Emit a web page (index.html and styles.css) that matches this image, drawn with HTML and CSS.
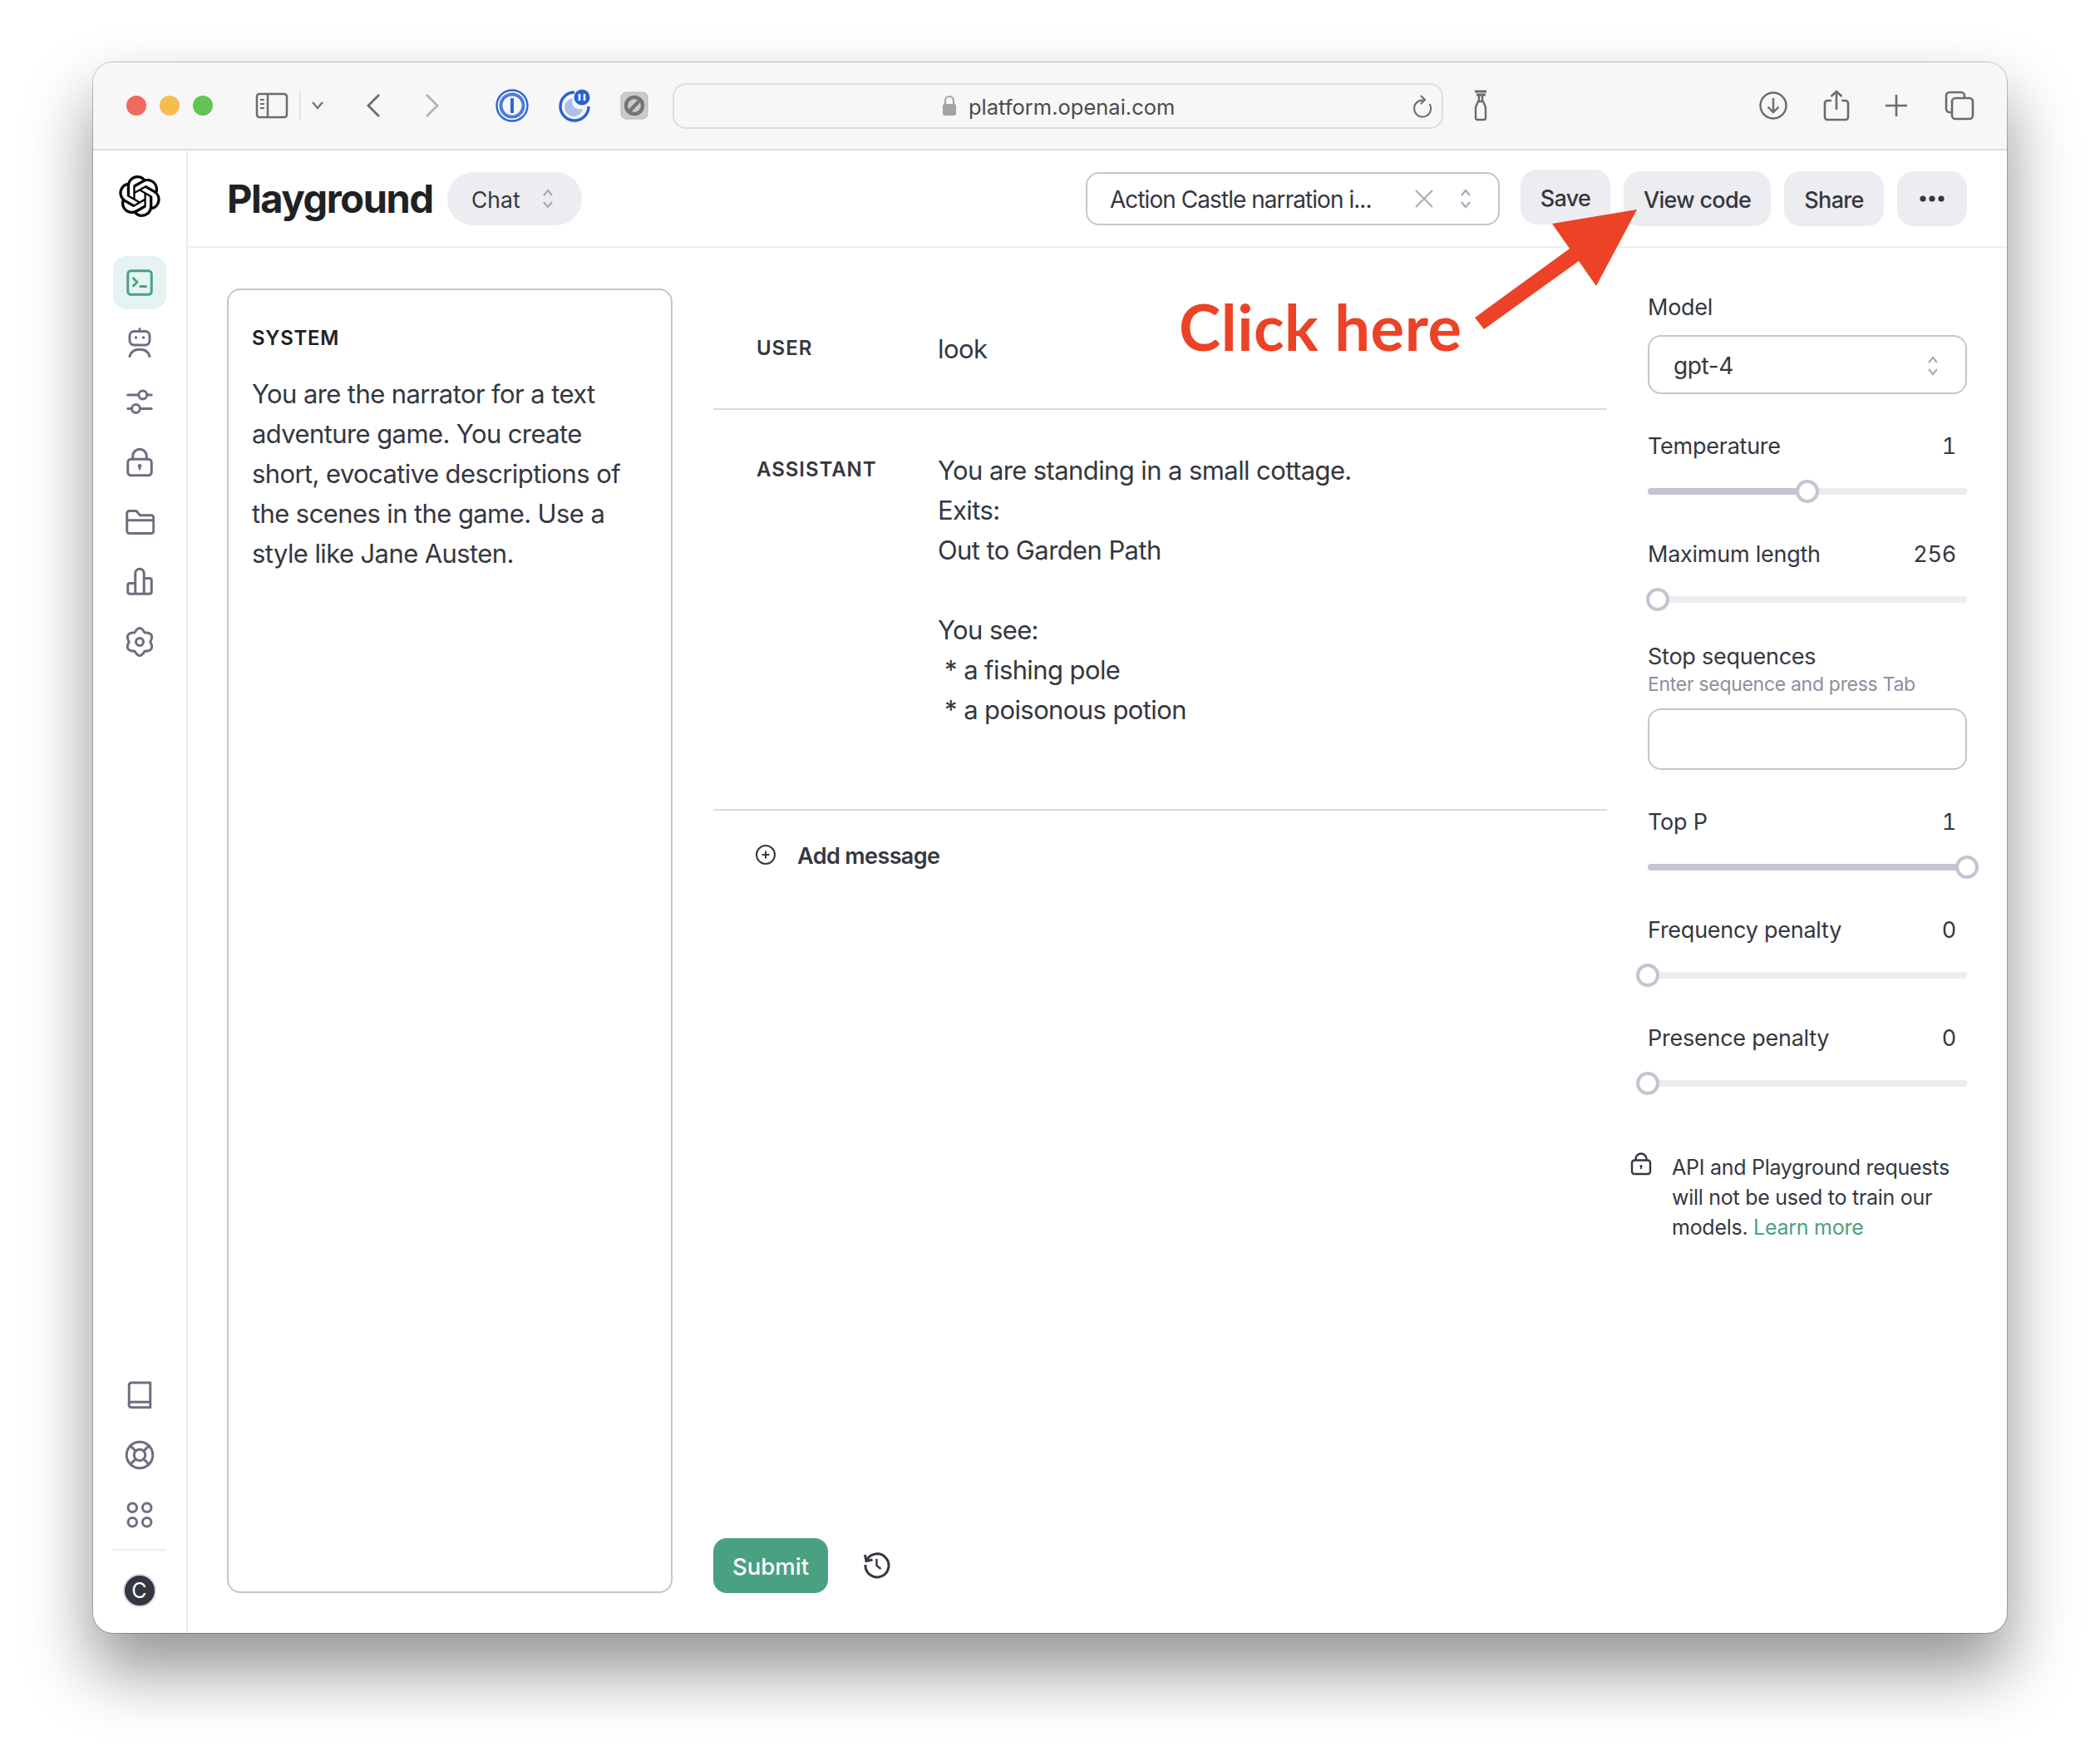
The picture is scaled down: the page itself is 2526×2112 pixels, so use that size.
FILE: index.html
```html
<!DOCTYPE html>
<html lang="en">
<head>
    <meta charset="UTF-8">
    <title>Playground - OpenAI</title>
    <link rel="stylesheet" href="styles.css">
</head>
<body>
<div class="window">
    <div class="toolbar">
        <div class="lights">
            <span class="light red"></span>
            <span class="light yellow"></span>
            <span class="light green"></span>
        </div>
        <svg class="tb-sidebar" width="40" height="32" viewBox="0 0 40 32" fill="none" stroke="#6b6b6b" stroke-width="2.5">
            <rect x="2" y="2" width="36" height="28" rx="3"/>
            <path d="M15 2v28"/>
            <path d="M6 9h5M6 14h5M6 19h5" stroke-width="2"/>
        </svg>
        <span class="tb-sep"></span>
        <svg class="tb-caret" width="16" height="12" viewBox="0 0 16 12" fill="none" stroke="#777" stroke-width="2.4"><path d="M2 2l6 7 6-7"/></svg>
        <svg class="tb-back" width="20" height="30" viewBox="0 0 20 30" fill="none" stroke="#6b6b6b" stroke-width="2.8"><path d="M17 2L4 15l13 13"/></svg>
        <svg class="tb-forward" width="20" height="30" viewBox="0 0 20 30" fill="none" stroke="#b3b3b3" stroke-width="2.8"><path d="M3 2l13 13L3 28"/></svg>
        <svg class="tb-onepass" width="40" height="40" viewBox="0 0 40 40" fill="none">
            <circle cx="20" cy="20" r="18.5" stroke="#2f66d8" stroke-width="2.4"/>
            <circle cx="20" cy="20" r="13.5" stroke="#4b7ddc" stroke-width="4"/>
            <rect x="18" y="11" width="4" height="18" rx="1" fill="#2f66d8"/>
        </svg>
        <svg class="tb-moon" width="42" height="42" viewBox="0 0 42 42" fill="none">
            <path d="M22 5a17 17 0 1 0 17 17" stroke="#2b60d6" stroke-width="3.4"/>
            <path d="M20 12a11 11 0 1 0 12 13c-8 2-15-4-12-13z" fill="#a9bfec"/>
            <circle cx="31" cy="11" r="9.5" fill="#2b60d6"/>
            <path d="M28 7v8M34 7v8" stroke="#fff" stroke-width="2.6"/>
        </svg>
        <svg class="tb-block" width="34" height="34" viewBox="0 0 34 34" fill="none">
            <rect x="1" y="1" width="32" height="32" rx="6" fill="#cbcbcb" stroke="#b5b5b5"/>
            <circle cx="17" cy="17" r="10" stroke="#757575" stroke-width="4.4"/>
            <path d="M11 24L24 10" stroke="#757575" stroke-width="4.4"/>
        </svg>
        <div class="urlbar">
            <svg class="url-lock" width="18" height="26" viewBox="0 0 18 26" fill="none">
                <path d="M4 12V7a5 5 0 0 1 10 0v5" stroke="#a3a3a3" stroke-width="2.2"/>
                <rect x="1" y="11" width="16" height="14" rx="2.5" fill="#a3a3a3"/>
            </svg>
            <span class="url-text">platform.openai.com</span>
            <svg class="url-reload" width="26" height="30" viewBox="0 0 26 30" fill="none" stroke="#6b6b6b" stroke-width="2">
                <path d="M20.5 12a10 10 0 1 1-7.5-4.500"/>
                <path d="M10 2l5 5-5 5"/>
            </svg>
        </div>
        <svg class="tb-spray" width="20" height="38" viewBox="0 0 20 38" fill="none" stroke="#6b6b6b" stroke-width="2.4">
            <path d="M3 2h14M5 6h11" stroke-width="3"/>
            <path d="M8 7v7M12 7v7"/>
            <path d="M7 14h6l3 7v13a2 2 0 0 1-2 2H6a2 2 0 0 1-2-2V21z"/>
        </svg>
        <svg class="tb-download" width="36" height="36" viewBox="0 0 36 36" fill="none" stroke="#6b6b6b" stroke-width="2.4">
            <circle cx="18" cy="18" r="15.500"/>
            <path d="M18 9v17M11.500 19.500L18 26l6.500-6.500"/>
        </svg>
        <svg class="tb-share" width="32" height="38" viewBox="0 0 32 38" fill="none" stroke="#6b6b6b" stroke-width="2.6">
            <path d="M10 13H5a3 3 0 0 0-3 3v17a3 3 0 0 0 3 3h22a3 3 0 0 0 3-3V16a3 3 0 0 0-3-3h-5"/>
            <path d="M16 24V2M9.500 8L16 2l6.500 6"/>
        </svg>
        <svg class="tb-plus" width="28" height="28" viewBox="0 0 28 28" fill="none" stroke="#6b6b6b" stroke-width="2.6"><path d="M14 1v26M1 14h26"/></svg>
        <svg class="tb-tabs" width="36" height="36" viewBox="0 0 36 36" fill="none" stroke="#6b6b6b" stroke-width="2.6">
            <path d="M8 26H6a4 4 0 0 1-4-4V6a4 4 0 0 1 4-4h14a4 4 0 0 1 4 4v2"/>
            <rect x="9" y="9" width="25" height="25" rx="4"/>
        </svg>
    </div>

    <div class="app">
        <aside class="sidebar">
            <svg class="logo" width="50" height="50" viewBox="0 0 24 24" fill="#000"><path d="M22.2819 9.8211a5.9847 5.9847 0 0 0-.5157-4.9108 6.0462 6.0462 0 0 0-6.5098-2.9A6.0651 6.0651 0 0 0 4.9807 4.1818a5.9847 5.9847 0 0 0-3.9977 2.9 6.0462 6.0462 0 0 0 .7427 7.0966 5.98 5.98 0 0 0 .511 4.9107 6.051 6.051 0 0 0 6.5146 2.9001A5.9847 5.9847 0 0 0 13.2599 24a6.0557 6.0557 0 0 0 5.7718-4.2058 5.9894 5.9894 0 0 0 3.9977-2.9001 6.0557 6.0557 0 0 0-.7475-7.0729zm-9.022 12.6081a4.4755 4.4755 0 0 1-2.8764-1.0408l.1419-.0804 4.7783-2.7582a.7948.7948 0 0 0 .3927-.6813v-6.7369l2.02 1.1686a.071.071 0 0 1 .038.052v5.5826a4.504 4.504 0 0 1-4.4945 4.4944zm-9.6607-4.1254a4.4708 4.4708 0 0 1-.5346-3.0137l.142.0852 4.783 2.7582a.7712.7712 0 0 0 .7806 0l5.8428-3.3685v2.3324a.0804.0804 0 0 1-.0332.0615L9.74 19.9502a4.4992 4.4992 0 0 1-6.1408-1.6464zM2.3408 7.8956a4.485 4.485 0 0 1 2.3655-1.9728V11.6a.7664.7664 0 0 0 .3879.6765l5.8144 3.3543-2.0201 1.1685a.0757.0757 0 0 1-.071 0l-4.8303-2.7865A4.504 4.504 0 0 1 2.3408 7.872zm16.5963 3.8558L13.1038 8.364 15.1192 7.2a.0757.0757 0 0 1 .071 0l4.8303 2.7913a4.4944 4.4944 0 0 1-.6765 8.1042v-5.6772a.79.79 0 0 0-.407-.667zm2.0107-3.0231l-.142-.0852-4.7735-2.7818a.7759.7759 0 0 0-.7854 0L9.409 9.2297V6.8974a.0662.0662 0 0 1 .0284-.0615l4.8303-2.7866a4.4992 4.4992 0 0 1 6.6802 4.66zM8.3065 12.863l-2.02-1.1638a.0804.0804 0 0 1-.038-.0567V6.0742a4.4992 4.4992 0 0 1 7.3757-3.4537l-.142.0805L8.704 5.459a.7948.7948 0 0 0-.3927.6813zm1.0976-2.3654l2.602-1.4998 2.6069 1.4998v2.9994l-2.5974 1.4997-2.6067-1.4997Z"/></svg>
            <nav class="side-nav">
                <a class="side-item active">
                    <svg class="side-icon" viewBox="0 0 24 24"><rect x="2.500" y="2.500" width="19" height="19" rx="2.500"/><path d="M7 8.500l3 3-3 3M12.500 15h4.500"/></svg>
                </a>
                <a class="side-item">
                    <svg class="side-icon" viewBox="0 0 24 24"><rect x="4" y="3" width="16" height="11" rx="3.500"/><path d="M12 1v2M4 23c1-3.500 4-5.500 8-5.500s7 2 8 5.500"/><circle class="dot" cx="9" cy="8" r="1.200"/><circle class="dot" cx="15" cy="8" r="1.200"/></svg>
                </a>
                <a class="side-item">
                    <svg class="side-icon" viewBox="0 0 24 24"><path d="M2.500 6H11M18 6h3.500M2.500 17H5.500M12.500 17h9"/><circle cx="14.500" cy="6" r="3.300"/><circle cx="9" cy="17" r="3.300"/></svg>
                </a>
                <a class="side-item">
                    <svg class="side-icon" viewBox="0 0 24 24"><rect x="2.500" y="9.500" width="19" height="13" rx="2.500"/><path d="M6.500 9.500V7a5.500 5.500 0 0 1 11 0v2.500"/><circle class="dot" cx="12" cy="15" r="1.600"/><path d="M12 15v2.500" stroke-width="1.600"/></svg>
                </a>
                <a class="side-item">
                    <svg class="side-icon" viewBox="0 0 24 24"><path d="M1.800 19V5a2 2 0 0 1 2-2h5.500l3 3.500h8.900a2 2 0 0 1 2 2V19a2 2 0 0 1-2 2H3.800a2 2 0 0 1-2-2z"/><path d="M1.800 10.500h20.400"/></svg>
                </a>
                <a class="side-item">
                    <svg class="side-icon" viewBox="0 0 24 24"><path d="M8.500 21.500H4A1.500 1.500 0 0 1 2.500 20v-5.500A1.500 1.500 0 0 1 4 13h4.500M8.500 21.500V5a3.500 3.500 0 0 1 7 0v16.500M15.500 9H20a1.500 1.500 0 0 1 1.500 1.500V20a1.500 1.500 0 0 1-1.500 1.500H8.500"/></svg>
                </a>
                <a class="side-item">
                    <svg class="side-icon" viewBox="0 0 24 24"><path d="M8 4.500Q12-2.500 16 4.500Q24.500 4.800 20.500 12Q24.500 19.200 16 19.500Q12 26.500 8 19.500Q-.5 19.200 3.500 12Q-.5 4.800 8 4.500Z"/><circle cx="12" cy="12" r="3"/></svg>
                </a>
            </nav>
            <nav class="side-nav bottom">
                <a class="side-item">
                    <svg class="side-icon" viewBox="0 0 24 24"><path d="M20.500 17.500H5.500a2.200 2.200 0 0 0 0 4.400h15V2H5.500a2 2 0 0 0-2 2v15.500"/></svg>
                </a>
                <a class="side-item">
                    <svg class="side-icon" viewBox="0 0 24 24"><circle cx="12" cy="12" r="10.500"/><circle cx="12" cy="12" r="4.500"/><path d="M4.600 4.600l4.200 4.200M19.400 4.600l-4.200 4.200M4.600 19.400l4.200-4.200M19.400 19.400l-4.200-4.200"/></svg>
                </a>
                <a class="side-item">
                    <svg class="side-icon" viewBox="0 0 24 24"><circle cx="6.200" cy="6.200" r="3.500"/><circle cx="17.800" cy="6.200" r="3.500"/><circle cx="6.200" cy="17.800" r="3.500"/><circle cx="17.800" cy="17.800" r="3.500"/></svg>
                </a>
            </nav>
            <div class="side-divider"></div>
            <div class="avatar">C</div>
        </aside>

        <div class="main">
            <header class="topbar">
                <h1 class="title">Playground</h1>
                <div class="mode-pill">
                    <span>Chat</span>
                    <svg class="updown" viewBox="0 0 16 26"><path d="M3 9l5-6 5 6M3 17l5 6 5-6"/></svg>
                </div>
                <div class="preset">
                    <span class="preset-name">Action Castle narration i...</span>
                    <svg class="preset-x" width="26" height="26" viewBox="0 0 26 26" fill="none" stroke="#a9a9b8" stroke-width="2"><path d="M3 3l20 20M23 3L3 23"/></svg>
                    <svg class="updown" viewBox="0 0 16 26"><path d="M3 9l5-6 5 6M3 17l5 6 5-6"/></svg>
                </div>
                <button class="btn btn-save">Save</button>
                <button class="btn btn-code">View code</button>
                <button class="btn btn-share">Share</button>
                <button class="btn btn-more">
                    <svg width="30" height="10" viewBox="0 0 30 10" fill="#353740"><circle cx="4" cy="5" r="3.600"/><circle cx="15" cy="5" r="3.600"/><circle cx="26" cy="5" r="3.600"/></svg>
                </button>
            </header>

            <div class="content">
                <section class="system">
                    <div class="system-label">SYSTEM</div>
                    <p class="system-text">You are the narrator for a text adventure game. You create short, evocative descriptions of the scenes in the game. Use a style like Jane Austen.</p>
                </section>

                <section class="messages">
                    <div class="message msg-user">
                        <div class="role">USER</div>
                        <div class="msg-text">look</div>
                    </div>
                    <div class="message msg-assistant">
                        <div class="role">ASSISTANT</div>
                        <div class="msg-text">You are standing in a small cottage.<br>Exits:<br>Out to Garden Path<br><br>You see:<br>&nbsp;* a fishing pole<br>&nbsp;* a poisonous potion</div>
                    </div>
                    <div class="add-message">
                        <svg width="26" height="26" viewBox="0 0 26 26" fill="none" stroke="#353740" stroke-width="2"><circle cx="13" cy="13" r="11"/><path d="M13 8.500v9M8.500 13h9"/></svg>
                        <span>Add message</span>
                    </div>
                    <div class="submit-row">
                        <button class="submit">Submit</button>
                        <svg class="history" width="34" height="34" viewBox="0 0 34 34" fill="none" stroke="#353740" stroke-width="3">
                            <path d="M4.500 11.500A14 14 0 1 1 3 17"/>
                            <path d="M2.500 5l1.500 7.500 7.500-1.500"/>
                            <path d="M16.500 10v8l5 4" stroke-width="2.400"/>
                        </svg>
                    </div>
                </section>

                <aside class="params">
                    <div class="label">Model</div>
                    <div class="model-select">
                        <span>gpt-4</span>
                        <svg class="updown" viewBox="0 0 16 26"><path d="M3 9l5-6 5 6M3 17l5 6 5-6"/></svg>
                    </div>

                    <div class="param first">
                        <div class="param-row"><span>Temperature</span><span class="param-value">1</span></div>
                        <div class="slider"><div class="track"></div><div class="fill" style="width: 50%"></div><div class="thumb" style="left: 50%"></div></div>
                    </div>
                    <div class="param">
                        <div class="param-row"><span>Maximum length</span><span class="param-value">256</span></div>
                        <div class="slider"><div class="track"></div><div class="thumb" style="left: 3.1%"></div></div>
                    </div>

                    <div class="stop">
                        <div class="label">Stop sequences</div>
                        <div class="hint">Enter sequence and press Tab</div>
                        <div class="stop-input"></div>
                    </div>

                    <div class="param first">
                        <div class="param-row"><span>Top P</span><span class="param-value">1</span></div>
                        <div class="slider"><div class="track"></div><div class="fill" style="width: 100%"></div><div class="thumb" style="left: 100%"></div></div>
                    </div>
                    <div class="param">
                        <div class="param-row"><span>Frequency penalty</span><span class="param-value">0</span></div>
                        <div class="slider"><div class="track"></div><div class="thumb" style="left: 0%"></div></div>
                    </div>
                    <div class="param">
                        <div class="param-row"><span>Presence penalty</span><span class="param-value">0</span></div>
                        <div class="slider"><div class="track"></div><div class="thumb" style="left: 0%"></div></div>
                    </div>

                    <div class="note">
                        <svg class="note-lock" width="26" height="28" viewBox="0 0 26 28" fill="none" stroke="#353740" stroke-width="2.400">
                            <rect x="2" y="9.500" width="22" height="16.500" rx="3"/>
                            <path d="M6.500 9.500V8a6.500 6.500 0 0 1 13 0v1.500"/>
                            <circle cx="13" cy="16.500" r="1.600" fill="#353740" stroke="none"/>
                            <path d="M13 17v3" stroke-width="1.800"/>
                        </svg>
                        <p>API and Playground requests will not be used to train our models. <a class="learn">Learn more</a></p>
                    </div>
                </aside>
            </div>
        </div>
    </div>

    <!-- annotation drawn over the screenshot -->
    <div class="click-here">Click here</div>
    <svg class="click-arrow" width="200" height="150" viewBox="0 0 200 150"><polygon fill="#ec4225" points="195,2 93,19 114,49 0,132 11,146 125,64 146,94"/></svg>
</div>
</body>
</html>
```

FILE: styles.css
```css
* {
    box-sizing: border-box;
}

html, body {
    margin: 0;
    height: 100%;
}

body {
    background: #fff;
    padding: 75px 112px 0;
    font-family: Inter, "Liberation Sans", sans-serif;
    color: #353740;
    overflow: hidden;
}

svg {
    display: block;
    flex: none;
}

.window {
    position: relative;
    width: 2302px;
    height: 1889px;
    border-radius: 24px;
    background: #fff;
    box-shadow: 0 0 0 1px rgba(0, 0, 0, 0.22), 0 44px 80px 2px rgba(0, 0, 0, 0.42);
    display: flex;
    flex-direction: column;
    overflow: visible;
}

/* safari toolbar */
.toolbar {
    height: 106px;
    flex: none;
    background: #f7f7f7;
    border-bottom: 2px solid #dedede;
    border-radius: 24px 24px 0 0;
    display: flex;
    align-items: center;
    padding-left: 40px;
}

.lights {
    display: flex;
    gap: 16px;
}

.light {
    width: 24px;
    height: 24px;
    border-radius: 50%;
}

.red { background: #ee6a5f; }
.yellow { background: #f5bd4f; }
.green { background: #61c454; }

.tb-sidebar { margin-left: 51px; }
.tb-sep {
    width: 2px;
    height: 36px;
    background: #e4e4e4;
    margin-left: 13px;
}
.tb-caret { margin-left: 12px; }
.tb-back { margin-left: 49px; }
.tb-forward { margin-left: 51px; }
.tb-onepass { margin-left: 66px; }
.tb-moon { margin-left: 33px; }
.tb-block { margin-left: 35px; }

.urlbar {
    width: 927px;
    height: 55px;
    margin-left: 29px;
    border: 2px solid #dedede;
    border-radius: 16px;
    display: flex;
    align-items: center;
    padding-left: 322px;
    position: relative;
}

.url-text {
    margin-left: 14px;
    padding-top: 3px;
    font-size: 25.500px;
    color: #4a4a4a;
}

.url-reload {
    position: absolute;
    right: 9px;
    top: 11px;
}

.tb-spray { margin-left: 35px; }
.tb-download { margin-left: 324px; }
.tb-share { margin-left: 42px; }
.tb-plus { margin-left: 42px; }
.tb-tabs { margin-left: 44px; }

/* app below the toolbar */
.app {
    flex: 1;
    display: flex;
    min-height: 0;
}

.sidebar {
    width: 114px;
    flex: none;
    border-right: 2px solid #ececf1;
    border-radius: 0 0 0 24px;
    padding: 30px 1px 31px 0;
    display: flex;
    flex-direction: column;
    align-items: center;
}

.side-nav {
    display: flex;
    flex-direction: column;
    align-items: center;
    gap: 8px;
    margin-top: 47px;
}

.side-nav.bottom {
    margin-top: auto;
    gap: 36px;
}

.side-item {
    width: 64px;
    height: 64px;
    border-radius: 16px;
    display: flex;
    align-items: center;
    justify-content: center;
}

.side-nav.bottom .side-item {
    height: 36px;
}

.side-item.active {
    background: #e6f3f3;
}

.side-icon {
    width: 36px;
    height: 36px;
    fill: none;
    stroke: #6e6e80;
    stroke-width: 2;
    stroke-linecap: round;
    stroke-linejoin: round;
}

.side-icon .dot {
    fill: #6e6e80;
    stroke: none;
}

.active .side-icon {
    stroke: #4aa181;
}

.side-divider {
    width: 64px;
    height: 2px;
    background: #ececf1;
    margin-top: 23px;
}

.avatar {
    width: 40px;
    height: 40px;
    margin-top: 28px;
    border-radius: 50%;
    background: #353740;
    border: 2px solid #d9d9e3;
    color: #fff;
    font-size: 25px;
    display: flex;
    align-items: center;
    justify-content: center;
}

.main {
    flex: 1;
    min-width: 0;
    display: flex;
    flex-direction: column;
}

.topbar {
    height: 117px;
    flex: none;
    border-bottom: 2px solid #ececf1;
    display: flex;
    align-items: center;
    padding: 0 48px 0 47px;
}

.title {
    margin: 0;
    font-size: 47px;
    font-weight: 700;
    letter-spacing: -0.03em;
    color: #202123;
    width: 265px;
}

.mode-pill {
    width: 162px;
    height: 64px;
    border-radius: 32px;
    background: #ececf1;
    display: flex;
    align-items: center;
    justify-content: space-between;
    padding: 0 33px 0 29px;
    font-size: 26.500px;
}

.mode-pill span {
    padding-top: 3px;
}

.updown {
    width: 16px;
    height: 26px;
    fill: none;
    stroke: #a9a9b8;
    stroke-width: 2.200;
}

.preset {
    width: 498px;
    height: 64px;
    margin-left: auto;
    border: 2px solid #c5c5d2;
    border-radius: 16px;
    display: flex;
    align-items: center;
    padding: 0 31px 0 27px;
    font-size: 28px;
    letter-spacing: -0.95px;
}

.preset-name {
    flex: 1;
    white-space: nowrap;
    padding-top: 3px;
}

.preset-x {
    margin-right: 29px;
}

.btn {
    height: 66px;
    border: none;
    border-radius: 20px;
    background: #ececf1;
    color: #353740;
    font-family: inherit;
    font-size: 27px;
    font-weight: 500;
    letter-spacing: -0.7px;
    padding: 3px 0 0;
    margin-left: 16px;
    display: flex;
    align-items: center;
    justify-content: center;
}

.btn-save { width: 108px; margin-left: 25px; margin-top: -4px; }
.btn-code { width: 177px; }
.btn-share { width: 120px; }
.btn-more { width: 84px; padding: 0; }

.content {
    flex: 1;
    min-height: 0;
    display: flex;
    gap: 49px;
    padding: 49px 48px 48px 47px;
}

.system {
    width: 536px;
    flex: none;
    border: 2px solid #c5c5d2;
    border-radius: 16px;
    padding: 42px 28px;
}

.system-label {
    font-size: 24px;
    font-weight: 600;
    letter-spacing: 0.03em;
    line-height: 32px;
    color: #202123;
}

.system-text {
    margin: 27px 0 0;
    font-size: 31px;
    letter-spacing: -0.6px;
    line-height: 48px;
}

.messages {
    flex: 1;
    min-width: 0;
    display: flex;
    flex-direction: column;
}

.message {
    display: flex;
    padding-left: 52px;
    border-bottom: 2px solid #d9d9e3;
}

.msg-user {
    padding-top: 49px;
    padding-bottom: 47px;
}

.msg-assistant {
    padding-top: 49px;
    padding-bottom: 95px;
}

.role {
    width: 218px;
    flex: none;
    font-size: 24px;
    font-weight: 600;
    letter-spacing: 0.04em;
    line-height: 46px;
}

.msg-text {
    font-size: 31px;
    letter-spacing: -0.6px;
    line-height: 48px;
}

.add-message {
    display: flex;
    align-items: center;
    padding: 35px 0 0 50px;
    font-size: 27px;
    font-weight: 600;
    letter-spacing: -0.6px;
    line-height: 40px;
}

.add-message svg {
    margin-right: 25px;
    margin-top: -5px;
}

.submit-row {
    margin-top: auto;
    display: flex;
    align-items: center;
}

.submit {
    width: 138px;
    height: 66px;
    border: none;
    border-radius: 16px;
    background: #4aa181;
    color: #fff;
    font-family: inherit;
    font-size: 27.500px;
    font-weight: 500;
    padding: 2px 0 0;
}

.history {
    margin-left: 42px;
    margin-top: -3px;
}

/* settings column */
.params {
    width: 384px;
    flex: none;
    padding-top: 4px;
    font-size: 27px;
    letter-spacing: -0.25px;
    line-height: 36px;
}

.label {
    padding-top: 1px;
    margin-bottom: -1px;
}

.model-select {
    height: 71px;
    margin-top: 16px;
    border: 2px solid #c5c5d2;
    border-radius: 16px;
    display: flex;
    align-items: center;
    justify-content: space-between;
    padding: 2px 31px 0 29px;
    font-size: 28px;
    letter-spacing: -0.4px;
}

.param {
    margin-top: 44px;
}

.param.first {
    margin-top: 45px;
}

.param-row {
    display: flex;
    justify-content: space-between;
    padding-right: 13px;
}

.param-value {
    font-variant-numeric: tabular-nums;
}

.slider {
    position: relative;
    height: 28px;
    margin-top: 22px;
}

.track, .fill {
    position: absolute;
    left: 0;
    top: 10px;
    height: 8px;
    border-radius: 4px;
}

.track {
    width: 100%;
    background: #ececf1;
}

.fill {
    background: #c5c5d2;
}

.thumb {
    position: absolute;
    top: 0;
    width: 28px;
    height: 28px;
    margin-left: -14px;
    border-radius: 50%;
    background: #fff;
    border: 4px solid #c5c5d2;
}

.stop {
    margin-top: 36px;
}

.hint {
    margin-top: -1px;
    font-size: 23px;
    letter-spacing: -0.3px;
    line-height: 32px;
    color: #8e8ea0;
}

.stop-input {
    height: 74px;
    margin-top: 13px;
    border: 2px solid #c5c5d2;
    border-radius: 16px;
}

.note {
    position: relative;
    margin-top: 69px;
    padding-left: 29px;
    font-size: 25px;
    letter-spacing: -0.27px;
    line-height: 36px;
}

.note p {
    margin: 0;
}

.note-lock {
    position: absolute;
    left: -21px;
    top: 0;
}

.learn {
    color: #4aa181;
}

/* red annotation */
.click-here {
    position: absolute;
    left: 1306px;
    top: 273px;
    font-family: Lato, sans-serif;
    font-size: 76px;
    font-weight: 700;
    letter-spacing: 0.5px;
    line-height: 90px;
    color: #ec4225;
    white-space: nowrap;
}

.click-arrow {
    position: absolute;
    left: 1662px;
    top: 175px;
}
```
